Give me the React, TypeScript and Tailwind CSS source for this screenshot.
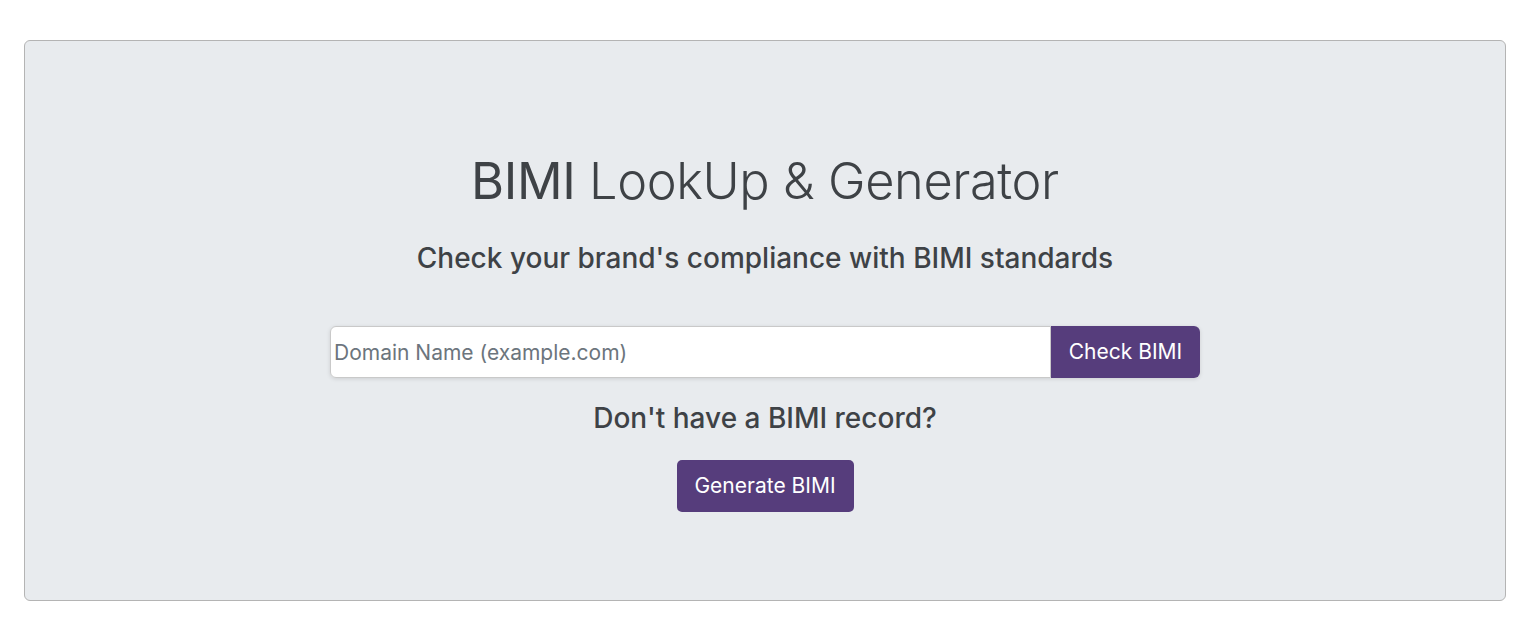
export default function App() {
	return (
		<div className="min-h-[626px] bg-white pl-[24px] pr-[30px] pt-[40px] font-['Inter','Noto_Sans',sans-serif]">
			<div className="flex h-[561px] flex-col items-center rounded-[6px] border border-[#b4b4b4] bg-[#e8ebee] pt-[110px] text-[#3e4246]">
				<h1 className="text-[50.5px] leading-[60px] font-light tracking-[-0.4px]">
					<span className="font-normal">BIMI</span> LookUp &amp; Generator
				</h1>

				<p className="mt-[29px] text-[28px] leading-[36px] font-medium">
					Check your brand's compliance with BIMI standards
				</p>

				<div className="mt-[50px] flex h-[52px] w-[870px] rounded-[6px] shadow-[0_1px_4px_rgba(0,0,0,0.12)]">
					<input
						type="text"
						placeholder="Domain Name (example.com)"
						className="h-full flex-1 rounded-l-[6px] border border-[#c9c9c9] bg-white px-[3px] text-[21px] text-[#495057] outline-none placeholder:text-[#6c757d]"
					/>
					<button className="h-full w-[149px] rounded-r-[6px] bg-[#563d7c] text-[21px] text-white">
						Check BIMI
					</button>
				</div>

				<p className="mt-[22px] text-[28px] leading-[36px] font-medium">
					Don't have a BIMI record?
				</p>

				<button className="mt-[24px] h-[52px] w-[177px] rounded-[5px] bg-[#563d7c] text-[21px] text-white">
					Generate BIMI
				</button>
			</div>
		</div>
	);
}
